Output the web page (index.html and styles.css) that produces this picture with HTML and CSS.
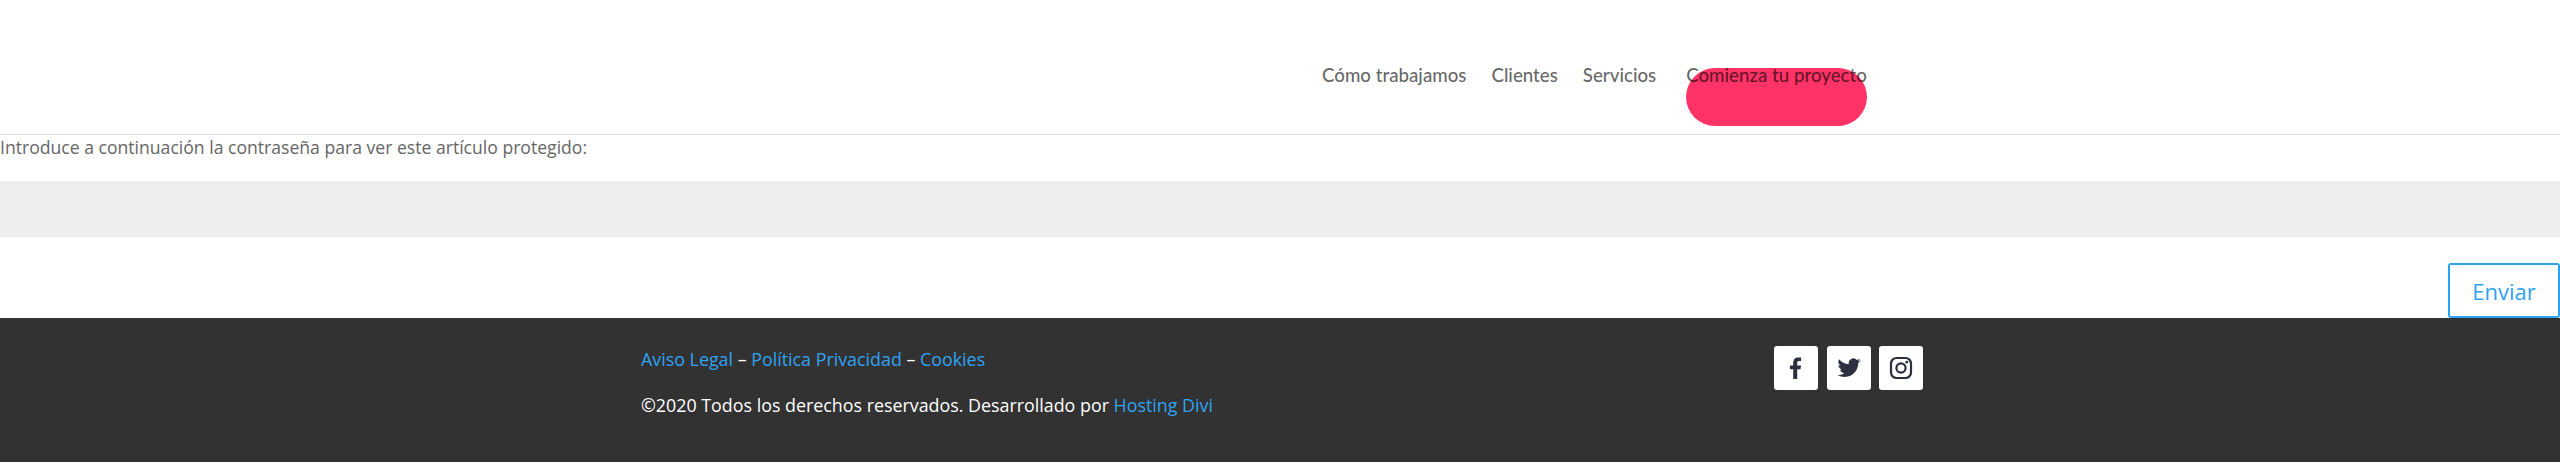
FILE: index.html
```html
<!DOCTYPE html>
<html lang="es">

<head>
    <meta charset="UTF-8">
    <meta name="viewport" content="width=device-width, initial-scale=1.0">
    <title>Contenido protegido</title>
    <link rel="stylesheet" href="styles.css">
</head>

<body>

    <header class="site-header">
        <nav class="main-nav">
            <a href="#">Cómo trabajamos</a>
            <a href="#">Clientes</a>
            <a href="#">Servicios</a>
            <a href="#" class="nav-cta">Comienza tu proyecto</a>
        </nav>
    </header>

    <main>
        <form class="password-form">
            <p class="password-note">Introduce a continuación la contraseña para ver este artículo protegido:</p>
            <input type="password" class="password-input" name="post_password" aria-label="Contraseña">
            <div class="form-actions">
                <button type="submit">Enviar</button>
            </div>
        </form>
    </main>

    <footer class="site-footer">
        <div class="footer-text">
            <p><a href="#">Aviso Legal</a> – <a href="#">Política Privacidad</a> – <a href="#">Cookies</a></p>
            <p>©2020 Todos los derechos reservados. Desarrollado por <a href="#">Hosting Divi</a></p>
        </div>
        <ul class="social-icons">
            <li>
                <a href="#" aria-label="Facebook">
                    <svg width="24" height="24" viewBox="0 0 24 24"><path d="M9.2 23V13.2H5.9V9.4h3.3V6.6C9.2 3.3 11.2 1.500 14.100 1.500c1.400 0 2.600.1 3 .15v3.400h-2c-1.600 0-1.900.75-1.900 1.850v2.500h3.800l-.5 3.800h-3.300V23z"/></svg>
                </a>
            </li>
            <li>
                <a href="#" aria-label="Twitter">
                    <svg width="24" height="24" viewBox="0 0 24 24"><path d="M23.500 4.600c-.85.38-1.760.63-2.700.75.97-.58 1.720-1.500 2.070-2.600-.9.54-1.920.93-3 1.140A4.720 4.720 0 0 0 11.800 8.200C7.900 8 4.400 6.100 2.100 3.200a4.730 4.730 0 0 0 1.460 6.300c-.78-.02-1.500-.24-2.140-.6v.06c0 2.290 1.630 4.200 3.790 4.630-.7.190-1.430.22-2.130.08a4.730 4.730 0 0 0 4.410 3.280A9.470 9.470 0 0 1 .5 18.900a13.360 13.360 0 0 0 7.240 2.120c8.690 0 13.440-7.200 13.440-13.440l-.02-.61c.93-.66 1.730-1.490 2.840-2.370z"/></svg>
                </a>
            </li>
            <li>
                <a href="#" aria-label="Instagram">
                    <svg width="24" height="24" viewBox="0 0 24 24" fill="none" stroke-width="2.200"><rect x="2" y="2" width="20" height="20" rx="5.500"/><circle cx="12" cy="12" r="4.600"/><circle class="dot" cx="17.800" cy="6.200" r="1.400"/></svg>
                </a>
            </li>
        </ul>
    </footer>

</body>

</html>
```

FILE: styles.css
```css
body {
    margin: 0;
    padding-bottom: 3px;
    background-color: #fff;
    font-family: "Open Sans", sans-serif;
    font-size: 17.6px;
    line-height: 1.6;
    color: #666;
}

a {
    text-decoration: none;
}

/* header */
.site-header {
    height: 134px;
    border-bottom: 1px solid #e2e2e2;
}

.main-nav {
    display: flex;
    gap: 25px;
    padding: 62px 0 0 1322px;
    font-family: "Lato", sans-serif;
    font-size: 18.7px;
    font-weight: 500;
    line-height: 26px;
}

.main-nav a {
    color: rgba(0, 0, 0, 0.62);
}

.nav-cta {
    position: relative;
    z-index: 0;
    margin-left: 5px;
}

.nav-cta::before {
    content: "";
    position: absolute;
    z-index: -1;
    left: 0;
    right: 0;
    top: 6px;
    height: 58px;
    border-radius: 29px;
    background-color: #ff3366;
}

/* password form */
.password-note {
    margin: 0;
    height: 46px;
    line-height: 25px;
}

.password-input {
    display: block;
    box-sizing: border-box;
    width: 100%;
    height: 56px;
    border: none;
    background-color: #eee;
}

.form-actions {
    display: flex;
    justify-content: flex-end;
    margin-top: 26px;
}

button {
    box-sizing: border-box;
    width: 112px;
    height: 55px;
    padding: 0;
    border: 2px solid #2ea3f2;
    border-radius: 3px;
    background-color: #fff;
    font-family: "Open Sans", sans-serif;
    font-size: 22px;
    color: #2ea3f2;
    cursor: pointer;
}

/* footer */
.site-footer {
    display: flex;
    box-sizing: border-box;
    height: 144px;
    padding: 28px 0 0 641px;
    background-color: #323232;
    color: #fff;
    font-size: 17.85px;
}

.footer-text {
    width: 1133px;
    line-height: 26px;
}

.footer-text p {
    margin: 0 0 20px;
}

.footer-text a {
    color: #2ea3f2;
}

.social-icons {
    display: flex;
    gap: 8.5px;
    margin: 0;
    padding: 0;
    list-style: none;
}

.social-icons a {
    display: flex;
    align-items: center;
    justify-content: center;
    width: 44px;
    height: 44px;
    border-radius: 3px;
    background-color: #fff;
}

.social-icons svg {
    fill: #2b2f3e;
    stroke: none;
}

.social-icons svg[fill="none"] {
    fill: none;
    stroke: #2b2f3e;
}

.social-icons .dot {
    fill: #2b2f3e;
    stroke: none;
}
```
